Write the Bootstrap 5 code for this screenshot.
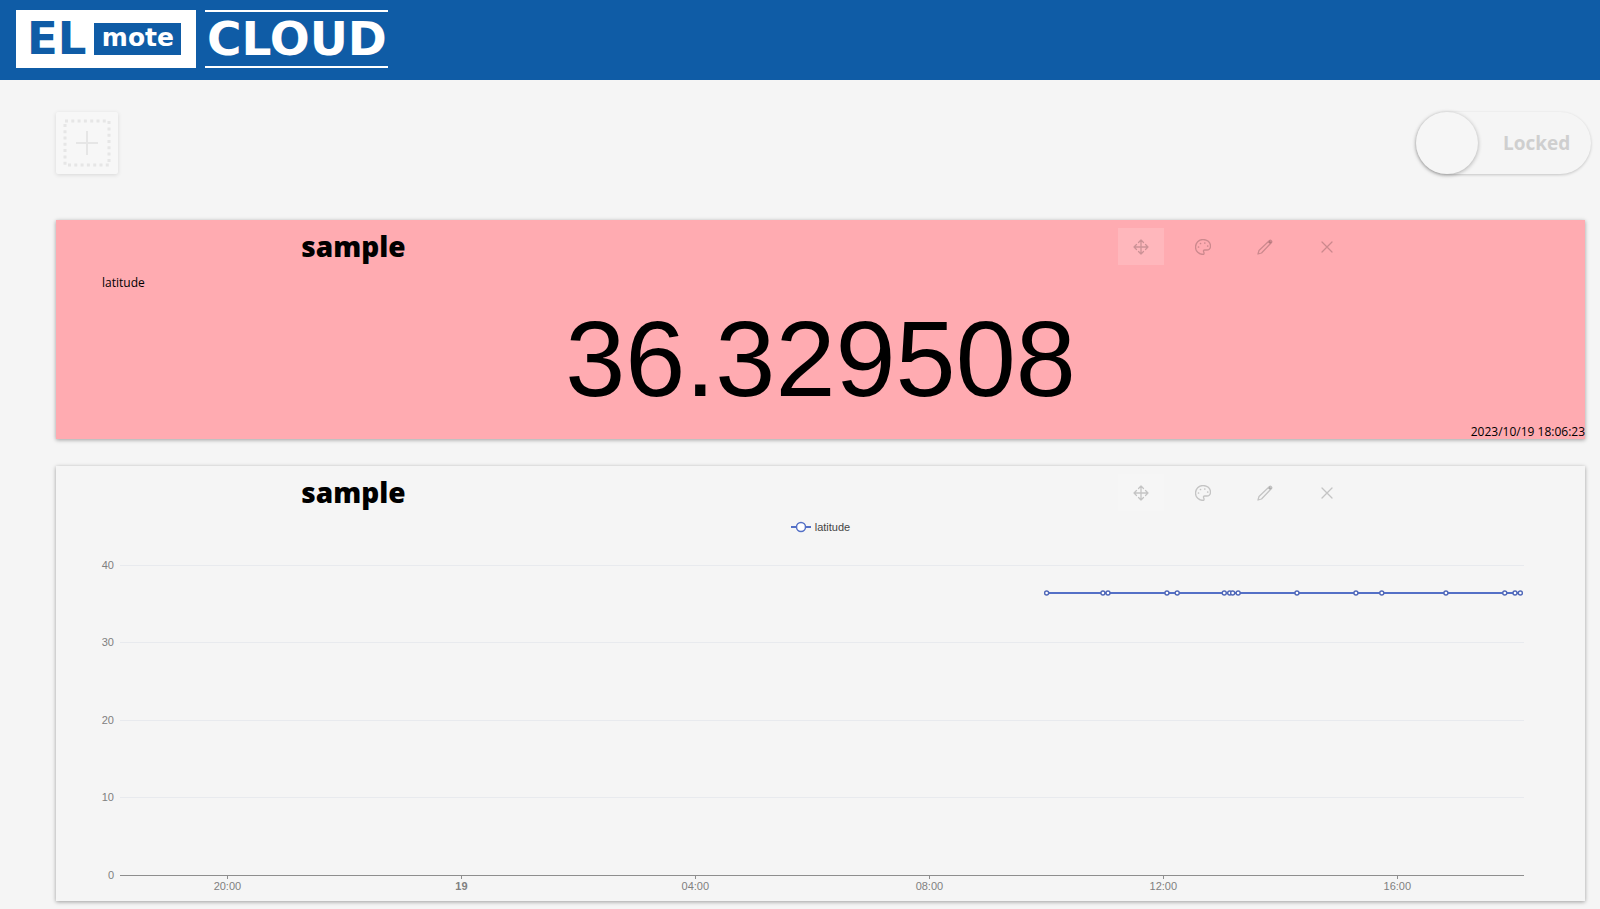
<!DOCTYPE html>
<html lang="en">
<head>
<meta charset="utf-8">
<meta name="viewport" content="width=device-width, initial-scale=1">
<title>ELmote CLOUD</title>
<link href="https://cdn.jsdelivr.net/npm/bootstrap@5.3.0/dist/css/bootstrap.min.css" rel="stylesheet">
<style>
  :root { --brand: #0f5ca6; --page: #f5f5f5; }
  body { background: var(--page); color: #000; font-family: "Open Sans", "Noto Sans", sans-serif; }
  .topbar { background: var(--brand); min-height: 80px; padding: 10px 16px; }
  .logo { gap: 9px; color: #fff; font-family: "DejaVu Sans", Verdana, sans-serif; font-weight: 700; line-height: 32px; }
  .logo:hover { color: #fff; }
  .logo-box { background: #fff; color: var(--brand); height: 58px; padding: 0 15px 0 11px; gap: 8px; }
  .logo-el { font-size: 45px; }
  .logo-mote { background: var(--brand); color: #fff; font-size: 25px; width: 87px; height: 32px; line-height: 30px; }
  .logo-cloud { border-top: 2px solid #fff; border-bottom: 2px solid #fff; height: 58px; width: 183px; font-size: 47px; }
  .board { padding: 32px 15px 7px 56px; }
  .tools { margin-right: -6px; margin-bottom: 46px; }
  .add-btn { width: 62px; height: 62px; padding: 0; border-radius: 2px; background: #f7f7f7; box-shadow: 0 1px 4px rgba(0,0,0,.12); }
  .lock { width: 175px; height: 62px; border-radius: 31px; box-shadow: 0 1px 3px rgba(0,0,0,.2); color: #cfcfcf; font-size: 19px; font-weight: 700; line-height: 24px; cursor: pointer; }
  .lock-knob { appearance: none; width: 62px; height: 62px; margin: 0 25px 0 0; border-radius: 50%; background: #f6f6f6; box-shadow: 0 1px 4px rgba(0,0,0,.3); cursor: pointer; }
  .panel { box-shadow: 0 1px 4px rgba(0,0,0,.36); background: var(--page); }
  .panel + .panel { margin-top: 27px; }
  .panel-pink { background: #ffabb1; }
  .panel-head { padding: 8px 15.4% 0 0; }
  .panel-title { width: 46%; font-size: 28px; font-weight: 800; line-height: 36px; }
  .tool-row { gap: 16px; }
  .tool { width: 46px; height: 37px; padding: 0; border-radius: 0; color: rgba(0,0,0,.2); }
  .tool-active, .tool-active:hover { background: rgba(255,255,255,.15); }
  .tool svg { width: 16px; height: 16px; fill: none; stroke: currentColor; stroke-width: 1.3; stroke-linecap: round; stroke-linejoin: round; }
  .reading-name { font-size: 12px; line-height: 20px; padding: 8px 46px 6px; }
  .reading { font-family: "Liberation Sans", Arial, sans-serif; font-size: 108px; line-height: 119px; margin-bottom: 6px; }
  .reading-time { font-size: 12px; line-height: 15px; }
  .legend-row { font-family: "Liberation Sans", Arial, sans-serif; font-size: 11px; line-height: 16px; color: #444; gap: 4px; margin-top: 8px; }
  .chart-wrap { padding: 0 61px 0 64px; }
  .chart { width: 100%; height: 366px; overflow: visible; font-family: "Liberation Sans", Arial, sans-serif; font-size: 11px; }
  .chart text { fill: #808080; }
  .chart .grid-lines { stroke: #e8eaee; shape-rendering: crispEdges; }
  .chart .axis { stroke: #8e8e8e; shape-rendering: crispEdges; }
  .chart .series line { stroke: #5470c6; stroke-width: 2; }
  .chart .series circle { fill: #fff; stroke: #5068b8; stroke-width: 1.4; }
</style>
</head>
<body>
<header class="topbar">
  <a href="#" class="logo d-flex text-decoration-none" aria-label="ELmote CLOUD">
    <span class="logo-box d-flex align-items-center"><span class="logo-el">EL</span><span class="logo-mote text-center">mote</span></span>
    <span class="logo-cloud d-flex align-items-center justify-content-center">CLOUD</span>
  </a>
</header>

<main class="board">
  <div class="tools d-flex justify-content-between">
    <button type="button" class="btn add-btn border-0 d-flex align-items-center justify-content-center" aria-label="Add panel">
      <svg width="48" height="48" viewBox="0 0 48 48" fill="none" stroke="#e6e6e6">
        <rect x="2" y="2" width="44" height="44" stroke-width="3" stroke-dasharray="3 3.3"/>
        <path d="M24 12v24M13 24h22" stroke-width="2"/>
      </svg>
    </button>
    <label class="lock d-flex align-items-center" for="lock"><input class="lock-knob" type="checkbox" role="switch" id="lock">Locked</label>
  </div>

  <section class="panel panel-pink">
    <div class="panel-head d-flex justify-content-between">
      <h2 class="panel-title text-center m-0">sample</h2>
      <div class="tool-row d-flex">
        <button type="button" class="btn tool tool-active border-0 d-flex align-items-center justify-content-center" aria-label="Move"><svg viewBox="0 0 16 16"><path d="M8 1v14M1 8h14M5.500 3.500 8 1l2.500 2.500M5.500 12.500 8 15l2.500-2.500M3.500 5.500 1 8l2.500 2.500M12.500 5.500 15 8l-2.500 2.500"/></svg></button>
        <button type="button" class="btn tool border-0 d-flex align-items-center justify-content-center" aria-label="Colour"><svg viewBox="0 0 16 16"><path d="M8.500 15.500C3.800 15.500.5 12.200.5 8 .5 3.800 3.800.5 8 .5s7.500 2.800 7.500 6.500c0 2.600-1.600 4-3.700 4H9.700c-1.200 0-1.500 1-1 2 .5 1 .7 1.700-.2 2.500z"/><path stroke-width="1.700" d="M3.500 8h.01M5.500 4.500h.01M9.800 4h.01M12.700 7h.01"/></svg></button>
        <button type="button" class="btn tool border-0 d-flex align-items-center justify-content-center" aria-label="Edit"><svg viewBox="0 0 16 16"><path d="M1 15l1-3.500L12.500 1.500q.9-.7 1.800.2t.2 1.800L4.500 14zM11.300 2.700l2 2"/><path stroke-width="2" d="m12.800 2.600.6.600"/></svg></button>
        <button type="button" class="btn tool border-0 d-flex align-items-center justify-content-center" aria-label="Close"><svg viewBox="0 0 16 16"><path d="m3 3 10 10M13 3 3 13"/></svg></button>
      </div>
    </div>
    <div class="reading-name">latitude</div>
    <div class="reading text-center">36.329508</div>
    <div class="reading-time text-end">2023/10/19 18:06:23</div>
  </section>

  <section class="panel">
    <div class="panel-head d-flex justify-content-between">
      <h2 class="panel-title text-center m-0">sample</h2>
      <div class="tool-row d-flex">
        <button type="button" class="btn tool tool-active border-0 d-flex align-items-center justify-content-center" aria-label="Move"><svg viewBox="0 0 16 16"><path d="M8 1v14M1 8h14M5.500 3.500 8 1l2.500 2.500M5.500 12.500 8 15l2.500-2.500M3.500 5.500 1 8l2.500 2.500M12.500 5.500 15 8l-2.500 2.500"/></svg></button>
        <button type="button" class="btn tool border-0 d-flex align-items-center justify-content-center" aria-label="Colour"><svg viewBox="0 0 16 16"><path d="M8.500 15.500C3.800 15.500.5 12.200.5 8 .5 3.800 3.800.5 8 .5s7.500 2.800 7.500 6.500c0 2.600-1.600 4-3.700 4H9.700c-1.200 0-1.500 1-1 2 .5 1 .7 1.700-.2 2.500z"/><path stroke-width="1.700" d="M3.500 8h.01M5.500 4.500h.01M9.800 4h.01M12.700 7h.01"/></svg></button>
        <button type="button" class="btn tool border-0 d-flex align-items-center justify-content-center" aria-label="Edit"><svg viewBox="0 0 16 16"><path d="M1 15l1-3.500L12.500 1.500q.9-.7 1.800.2t.2 1.800L4.500 14zM11.300 2.700l2 2"/><path stroke-width="2" d="m12.800 2.600.6.600"/></svg></button>
        <button type="button" class="btn tool border-0 d-flex align-items-center justify-content-center" aria-label="Close"><svg viewBox="0 0 16 16"><path d="m3 3 10 10M13 3 3 13"/></svg></button>
      </div>
    </div>
    <div class="legend-row d-flex align-items-center justify-content-center">
      <svg width="20" height="12" viewBox="0 0 20 12" fill="#fff" stroke="#5470c6"><path d="M0 6h20" stroke-width="2"/><circle cx="10" cy="6" r="4.500" stroke-width="1.500"/></svg>
      <span>latitude</span>
    </div>
    <div class="chart-wrap">
      <svg class="chart d-block" role="img" aria-label="Latitude over time">
        <g class="grid-lines">
          <line x1="0" x2="100%" y1="30" y2="30"/><line x1="0" x2="100%" y1="107" y2="107"/>
          <line x1="0" x2="100%" y1="185" y2="185"/><line x1="0" x2="100%" y1="262" y2="262"/>
        </g>
        <g text-anchor="end">
          <text x="-6" y="34">40</text><text x="-6" y="111">30</text><text x="-6" y="189">20</text><text x="-6" y="266">10</text><text x="-6" y="344">0</text>
        </g>
        <g class="axis">
          <line x1="0" x2="100%" y1="340" y2="340"/>
          <line x1="7.65%" x2="7.65%" y1="340" y2="344"/><line x1="24.32%" x2="24.32%" y1="340" y2="344"/>
          <line x1="40.98%" x2="40.98%" y1="340" y2="344"/><line x1="57.65%" x2="57.65%" y1="340" y2="344"/>
          <line x1="74.31%" x2="74.31%" y1="340" y2="344"/><line x1="90.98%" x2="90.98%" y1="340" y2="344"/>
        </g>
        <g text-anchor="middle">
          <text x="7.65%" y="355">20:00</text><text x="24.32%" y="355" font-weight="700">19</text><text x="40.98%" y="355">04:00</text>
          <text x="57.65%" y="355">08:00</text><text x="74.31%" y="355">12:00</text><text x="90.98%" y="355">16:00</text>
        </g>
        <g class="series">
          <line x1="66%" x2="99.74%" y1="58" y2="58"/>
          <circle cx="66%" cy="58" r="2"/><circle cx="70.01%" cy="58" r="2"/><circle cx="70.37%" cy="58" r="2"/><circle cx="74.57%" cy="58" r="2"/>
          <circle cx="75.3%" cy="58" r="2"/><circle cx="78.65%" cy="58" r="2"/><circle cx="79.04%" cy="58" r="2"/><circle cx="79.25%" cy="58" r="2"/>
          <circle cx="79.64%" cy="58" r="2"/><circle cx="83.83%" cy="58" r="2"/><circle cx="88.03%" cy="58" r="2"/><circle cx="89.87%" cy="58" r="2"/>
          <circle cx="94.44%" cy="58" r="2"/><circle cx="98.63%" cy="58" r="2"/><circle cx="99.36%" cy="58" r="2"/><circle cx="99.74%" cy="58" r="2"/>
        </g>
      </svg>
    </div>
  </section>
</main>
<script src="https://cdn.jsdelivr.net/npm/bootstrap@5.3.0/dist/js/bootstrap.bundle.min.js"></script>
</body>
</html>
